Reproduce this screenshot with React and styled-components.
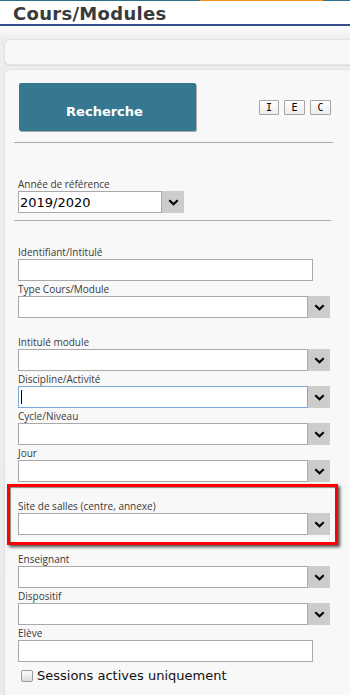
import React from "react";
import styled, { createGlobalStyle } from "styled-components";

const GlobalStyle = createGlobalStyle`
  html, body {
    margin: 0;
    padding: 0;
  }
  body {
    width: 350px;
    height: 695px;
    overflow: hidden;
    background: #ececec;
    font-family: "Open Sans", sans-serif;
  }
`;

const Page = styled.div`
  width: 350px;
  height: 695px;
  overflow: hidden;
`;

const Stripe = styled.div`
  display: flex;
  height: 1px;
`;

const StripeSeg = styled.div`
  width: ${(props) => props.w}px;
  flex: ${(props) => (props.grow ? 1 : "none")};
  background: ${(props) => props.color};
`;

const TitleBar = styled.div`
  height: 23px;
  display: flex;
  align-items: flex-end;
  padding-left: 13px;
  background: #fff;
  border-bottom: 2px solid #34508a;
`;

const Title = styled.h1`
  margin: 0 0 1px 0;
  font-family: "DejaVu Sans", Verdana, sans-serif;
  font-size: 18px;
  line-height: 18px;
  font-weight: bold;
  letter-spacing: 0.3px;
  color: #3a3a3a;
`;

const Main = styled.div`
  padding-top: 13px;
  background: linear-gradient(#fbfbfb, #eeeeee 13px, #ececec);
`;

const Panel = styled.div`
  margin-left: 4px;
  width: 380px;
  box-sizing: border-box;
  background: #f8f8f8;
  border: 1px solid #e3e3e3;
  border-radius: 6px;
  box-shadow: 0 1px 2px rgba(0, 0, 0, 0.08);
`;

const TopPanel = styled(Panel)`
  height: 26px;
  margin-bottom: 4px;
`;

const SearchPanel = styled(Panel)`
  padding: 13px 0 40px 9px;
`;

const ActionRow = styled.div`
  width: 319px;
  display: flex;
  align-items: center;
  justify-content: space-between;
`;

const SearchButton = styled.button`
  margin-left: 5px;
  width: 177px;
  height: 48px;
  padding: 8px 6px 0 0;
  border: none;
  border-radius: 2px;
  background: #367791;
  box-shadow: 1px 1px 0 #a8a8a8;
  color: #fff;
  font-family: "DejaVu Sans", Verdana, sans-serif;
  font-size: 13px;
  font-weight: bold;
`;

const ExportGroup = styled.div`
  display: flex;
  gap: 5px;
  margin-right: 2px;
`;

const ExportButton = styled.button`
  width: ${(props) => props.w}px;
  height: 15px;
  padding: 0;
  border: 1px solid #a6a6a6;
  border-radius: 1px;
  background: linear-gradient(#ffffff, #ececec);
  font-family: "DejaVu Sans Mono", monospace;
  font-size: 10px;
  line-height: 13px;
  color: #000;
`;

const Rule = styled.div`
  width: ${(props) => props.w}px;
  height: 1px;
  margin-top: ${(props) => props.mt}px;
  background: #ababab;
`;

const Fields = styled.div`
  margin-left: 4px;
  width: 312px;
`;

const Group = styled.div`
  margin-top: ${(props) => props.mt}px;
`;

const Label = styled.div`
  height: 13px;
  font-size: 10px;
  line-height: 13px;
  color: #3a3a3a;
  white-space: nowrap;
`;

const TextBox = styled.div`
  width: ${(props) => props.w || 295}px;
  height: 22px;
  box-sizing: border-box;
  display: flex;
  align-items: center;
  background: #fff;
  border: 1px solid ${(props) => (props.focused ? "#7ba7db" : "#a9a9a9")};
  font-family: "DejaVu Sans", Verdana, sans-serif;
  font-size: 13px;
  color: #000;
  padding-left: 1px;
`;

const Caret = styled.span`
  width: 1px;
  height: 14px;
  margin-left: 1px;
  background: #000;
`;

const SelectRow = styled.div`
  width: ${(props) => props.w || 312}px;
  height: 22px;
  display: flex;
`;

const SelectBox = styled(TextBox)`
  flex: 1;
  width: auto;
`;

const ChevronBox = styled.div`
  width: 22px;
  height: 22px;
  flex: none;
  display: flex;
  align-items: center;
  justify-content: center;
  background: #cccccc;
`;

const Highlight = styled.div`
  margin: 2px -8px 0 -11px;
  padding: 13px 5px 7px 8px;
  border: 3px solid #ff0000;
  box-shadow: 2px 2px 3px rgba(0, 0, 0, 0.7), inset 1px 1px 1px rgba(0, 0, 0, 0.45);
`;

const CheckRow = styled.label`
  margin-top: 7px;
  height: 14px;
  display: flex;
  align-items: center;
  font-family: "DejaVu Sans", Verdana, sans-serif;
  font-size: 13px;
  line-height: 14px;
  color: #111;
`;

const CheckBox = styled.span`
  width: 12px;
  height: 12px;
  margin-left: 3px;
  margin-right: 4px;
  box-sizing: border-box;
  border: 1px solid #9a9a9a;
  border-radius: 2px;
  background: linear-gradient(#fdfdfd, #dcdcdc);
`;

const Chevron = () => (
  <svg width="11" height="7" viewBox="0 0 11 7">
    <polyline
      points="1.3,1.3 5.5,5.3 9.7,1.3"
      fill="none"
      stroke="#000"
      strokeWidth="2.2"
    />
  </svg>
);

const Select = ({ w, value, focused }) => (
  <SelectRow w={w}>
    <SelectBox focused={focused}>
      {value}
      {focused && <Caret />}
    </SelectBox>
    <ChevronBox>
      <Chevron />
    </ChevronBox>
  </SelectRow>
);

const Field = ({ label, mt = 2, type = "select", ...rest }) => (
  <Group mt={mt}>
    <Label>{label}</Label>
    {type === "select" ? <Select {...rest} /> : <TextBox {...rest} />}
  </Group>
);

export default function App() {
  return (
    <Page>
      <GlobalStyle />
      <Stripe>
        <StripeSeg w={200} color="#2f7088" />
        <StripeSeg w={123} color="#f7941d" />
        <StripeSeg grow color="#2f7088" />
      </Stripe>
      <TitleBar>
        <Title>Cours/Modules</Title>
      </TitleBar>
      <Main>
        <TopPanel />
        <SearchPanel>
          <ActionRow>
            <SearchButton>Recherche</SearchButton>
            <ExportGroup>
              <ExportButton w={20}>I</ExportButton>
              <ExportButton w={21}>E</ExportButton>
              <ExportButton w={21}>C</ExportButton>
            </ExportGroup>
          </ActionRow>
          <Rule w={319} mt={11} />
          <Fields>
            <Field label="Année de référence" mt={35} w={166} value="2019/2020" />
          </Fields>
          <Rule w={317} mt={7} />
          <Fields>
            <Field label="Identifiant/Intitulé" mt={25} type="text" />
            <Field label="Type Cours/Module" />
            <Field label="Intitulé module" mt={18} />
            <Field label="Discipline/Activité" focused />
            <Field label="Cycle/Niveau" />
            <Field label="Jour" />
            <Highlight>
              <Field label="Site de salles (centre, annexe)" mt={0} />
            </Highlight>
            <Field label="Enseignant" mt={8} />
            <Field label="Dispositif" />
            <Field label="Elève" type="text" />
            <CheckRow>
              <CheckBox />
              Sessions actives uniquement
            </CheckRow>
          </Fields>
        </SearchPanel>
      </Main>
    </Page>
  );
}
